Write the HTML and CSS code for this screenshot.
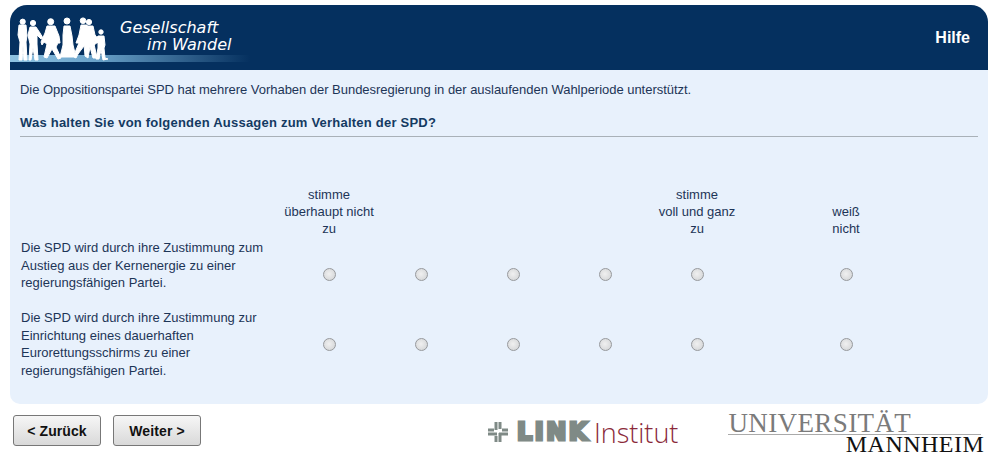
FILE: index.html
```html
<!DOCTYPE html>
<html lang="de">
<head>
  <meta charset="UTF-8">
  <title>Gesellschaft im Wandel</title>
  <link rel="stylesheet" href="styles.css">
</head>
<body>

  <!-- Kopfzeile -->
  <div class="header">
    <div class="brand">
      <svg class="people" width="110" height="60" viewBox="10 5 110 60">
        <g fill="#fff" stroke="#fff" stroke-width="1" stroke-linejoin="round">
          <circle cx="22.700" cy="21.700" r="2.600"/>
          <path d="M19 25L26 25L27 36L26 42L27 60L24 60L23 46L22 60L19 60L20 42L18 35Z"/>
          <circle cx="33" cy="23" r="2.600"/>
          <path d="M30 27L36 27L40 33L43 38L41 39L37 35L37 44L38 60L35 60L33 48L31 60L29 60L30 44L28 35Z"/>
          <circle cx="50.700" cy="21.700" r="3"/>
          <path d="M47 26L55 26L59 36L60 43L58 43L56 47L61 58L58 59L52 49L47 58L44 57L47 44L44 42L42 45L41 42L45 33Z"/>
          <circle cx="67" cy="21" r="3"/>
          <path d="M64 26L70 26L72 36L73 45L76 57L60 57L63 45L63 35Z"/>
          <circle cx="83" cy="20.700" r="2.800"/>
          <path d="M81 25L87 25L88 36L86 42L84 46L78 54L76 58L74 57L76 50L79 43L76 43L79 35Z"/>
          <circle cx="89" cy="22" r="2.600"/>
          <path d="M86 26L93 26L95 35L100 41L98 43L94 40L94 44L97 58L93 58L90 47L88 58L85 56L84 44L86 36Z"/>
          <circle cx="101" cy="32" r="2.200"/>
          <path d="M98 36L104 36L105 45L104 48L105 58L108 59L103 60L101 50L99 59L96 59L98 48L98 42L94 45L93 43Z"/>
        </g>
      </svg>
      <div class="brand-text">
        <span>Gesellschaft</span>
        <span class="brand-indent">im Wandel</span>
      </div>
    </div>
    <a class="help">Hilfe</a>
  </div>

  <!-- Frage -->
  <div class="panel">
    <p class="intro">Die Oppositionspartei SPD hat mehrere Vorhaben der Bundesregierung in der auslaufenden Wahlperiode unterstützt.</p>
    <h3 class="question">Was halten Sie von folgenden Aussagen zum Verhalten der SPD?</h3>

    <div class="grid">
      <div class="scale-row">
        <div></div>
        <div class="scale">stimme<br>überhaupt nicht<br>zu</div>
        <div></div>
        <div></div>
        <div></div>
        <div class="scale">stimme<br>voll und ganz<br>zu</div>
        <div class="scale">weiß<br>nicht</div>
      </div>

      <div class="item-row">
        <div class="item">Die SPD wird durch ihre Zustimmung zum Austieg aus der Kernenergie zu einer regierungsfähigen Partei.</div>
        <div class="cell"><input type="radio" name="q1"></div>
        <div class="cell"><input type="radio" name="q1"></div>
        <div class="cell"><input type="radio" name="q1"></div>
        <div class="cell"><input type="radio" name="q1"></div>
        <div class="cell"><input type="radio" name="q1"></div>
        <div class="cell"><input type="radio" name="q1"></div>
      </div>

      <div class="item-row">
        <div class="item">Die SPD wird durch ihre Zustimmung zur Einrichtung eines dauerhaften Eurorettungsschirms zu einer regierungsfähigen Partei.</div>
        <div class="cell"><input type="radio" name="q2"></div>
        <div class="cell"><input type="radio" name="q2"></div>
        <div class="cell"><input type="radio" name="q2"></div>
        <div class="cell"><input type="radio" name="q2"></div>
        <div class="cell"><input type="radio" name="q2"></div>
        <div class="cell"><input type="radio" name="q2"></div>
      </div>
    </div>
  </div>

  <!-- Fusszeile -->
  <div class="footer">
    <div class="buttons">
      <button>&lt; Zurück</button>
      <button>Weiter &gt;</button>
    </div>
    <div class="link-logo">
      <svg width="20" height="20" viewBox="0 0 20 20">
        <path fill="#7f8a86" d="M6.500 0h3v8h-3zM10.500 0h3v7h-3zM0 6.500h6v3H0zM14 6.500h6v3h-6zM0 10.500h9v3H0zM11 10.500h9v3h-9zM6.500 14h3v6h-3zM10.500 11h3v9h-3z"/>
      </svg>
      <span class="link-name">LINK</span>
      <span class="link-inst">Institut</span>
    </div>
    <div class="uni-logo">
      <div class="uni-top">UNIVERSITÄT</div>
      <div class="uni-bottom">MANNHEIM</div>
    </div>
  </div>

</body>
</html>
```

FILE: styles.css
```css
body {
  margin: 0;
  padding: 5px 10px 0;
  background-color: #fff;
  color: #333;
  font-family: "Liberation Sans", Arial, sans-serif;
  font-size: 13px;
}

.header {
  height: 65px;
  background-color: #05305f;
  border-radius: 17px 17px 0 0;
  display: flex;
  justify-content: space-between;
  align-items: center;
  overflow: hidden;
}

.brand {
  width: 240px;
  height: 65px;
  display: flex;
  background: linear-gradient(to right, #8fc3e2, #6ba3ca 35%, #05305f 100%) no-repeat 0 50px / 100% 7px;
}

.people {
  flex-shrink: 0;
  align-self: flex-start;
}

.brand-text {
  color: #fff;
  font-family: "DejaVu Sans", sans-serif;
  font-style: italic;
  font-size: 16px;
  line-height: 17px;
  margin: 14px 0 0 0;
  white-space: nowrap;
}

.brand-text span {
  display: block;
}

.brand-indent {
  margin-left: 27px;
}

.help {
  color: #fff;
  font-weight: bold;
  font-size: 16px;
  margin-right: 18px;
}

.panel {
  height: 334px;
  box-sizing: border-box;
  background-color: #e8f1fc;
  border-radius: 0 0 10px 10px;
  padding: 12px 10px 0;
  color: #1d3557;
}

.intro {
  margin: 0;
  line-height: 15px;
  letter-spacing: -0.03px;
}

.question {
  margin: 18px 0 0;
  padding-bottom: 6px;
  font-size: 13px;
  line-height: 15px;
  font-weight: bold;
  letter-spacing: 0.22px;
  color: #143a62;
  border-bottom: 1px solid #a9b1b8;
}

.grid {
  margin-top: 49px;
}

.scale-row,
.item-row {
  display: grid;
  grid-template-columns: 263px repeat(5, 92px) 206px;
}

.scale-row {
  line-height: 17px;
  text-align: center;
  align-items: end;
  margin-bottom: 2px;
}

.item-row {
  align-items: center;
  height: 70px;
}

.item {
  align-self: start;
  padding-left: 1px;
  padding-right: 8px;
  line-height: 17.5px;
}

.cell {
  display: flex;
  justify-content: center;
}

.cell input {
  margin: 0;
  width: 13px;
  height: 13px;
  appearance: none;
  border-radius: 50%;
  border: 1px solid #97999c;
  background: radial-gradient(circle at 45% 45%, #f0f0f0, #cfd1d3);
}

.footer {
  display: flex;
  align-items: flex-start;
  height: 57px;
}

.buttons {
  display: flex;
  gap: 12px;
  margin: 11px 0 0 3px;
}

.buttons button {
  width: 88px;
  height: 31px;
  padding: 0;
  font-family: "Liberation Sans", Arial, sans-serif;
  font-size: 14px;
  font-weight: bold;
  letter-spacing: 0.1px;
  color: #111;
  border: 1px solid #777;
  border-radius: 3px;
  background: linear-gradient(to bottom, #f6f6f6, #d9d9d9);
}

.link-logo {
  display: flex;
  align-items: center;
  gap: 4px;
  margin: 16px 0 0 287px;
  height: 24px;
}

.link-logo svg {
  margin-right: 5px;
}

.link-name {
  font-family: "DejaVu Sans", sans-serif;
  font-weight: bold;
  font-size: 24px;
  letter-spacing: 2.500px;
  color: #7f8a86;
  -webkit-text-stroke: 3px #7f8a86;
}

.link-inst {
  font-family: "Open Sans", sans-serif;
  font-size: 27px;
  color: #8a2a3a;
  font-weight: 300;
}

.uni-logo {
  margin: 7px 0 0 50px;
  width: 256px;
  font-family: "Liberation Serif", serif;
}

.uni-top {
  font-size: 27px;
  line-height: 24px;
  letter-spacing: 0.4px;
  color: #7b7b7b;
  border-bottom: 1px solid #aaa;
  height: 23px;
  margin-right: 3px;
}

.uni-bottom {
  font-size: 24px;
  line-height: 19px;
  letter-spacing: 0.5px;
  color: #111;
  text-align: right;
}
```
